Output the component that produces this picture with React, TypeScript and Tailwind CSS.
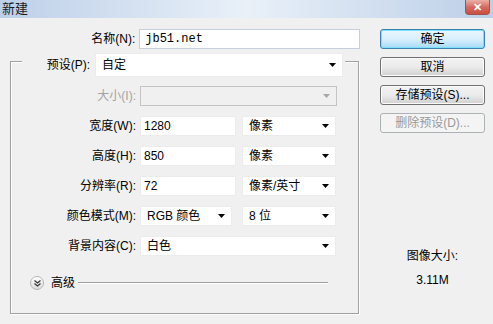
import React from 'react';

const Arrow = ({ disabled = false }: { disabled?: boolean }) => (
    <svg width="7" height="4" viewBox="0 0 7 4" className="shrink-0">
        <path d="M0 0h7L3.5 4z" fill={disabled ? '#a8a8a8' : '#000'} />
    </svg>
);

const Select = ({ value, width, disabled = false }: { value: string; width: string; disabled?: boolean }) => (
    <div
        className={`${width} flex h-[20px] items-center justify-between border pr-[6px] pl-[6px] ${
            disabled ? 'border-[#c4c4c4] bg-[#f0f0f0]' : 'border-[#ececec] bg-white'
        }`}
    >
        <span className="whitespace-nowrap">{value}</span>
        <Arrow disabled={disabled} />
    </div>
);

const Field = ({ value, width }: { value: string; width: string }) => (
    <div className={`${width} flex h-[20px] items-center border border-[#ececec] bg-white pl-[3px]`}>{value}</div>
);

const Row = ({ label, disabled = false, children }: { label: string; disabled?: boolean; children: React.ReactNode }) => (
    <div className="flex h-[20px] items-center">
        <span className={`w-[129px] pr-[4px] text-right whitespace-nowrap ${disabled ? 'text-[#a3a3a3]' : ''}`}>{label}</span>
        <div className="flex gap-[6px]">{children}</div>
    </div>
);

const Btn = ({ label, kind = 'normal' }: { label: string; kind?: 'default' | 'normal' | 'disabled' }) => {
    const styles = {
        default:
            'border-[#3c7fb1] bg-gradient-to-b from-[#eaf6fd] via-[#d9f0fc] to-[#a7d9f5] shadow-[inset_0_0_0_1px_#7ce0f8]',
        normal: 'border-[#707070] bg-gradient-to-b from-[#f2f2f2] via-[#ebebeb] to-[#d0d0d0] shadow-[inset_0_0_0_1px_#fcfcfc]',
        disabled: 'border-[#adb2b5] bg-[#f4f4f4] text-[#9a9a9a]',
    }[kind];
    return (
        <div className={`flex h-[20px] w-[105px] items-center justify-center rounded-[3px] border ${styles}`}>{label}</div>
    );
};

export default function App() {
    return (
        <div className="h-[324px] w-[493px] overflow-hidden bg-[#f0f0f0] font-['Liberation_Sans','Noto_Sans_CJK_SC',sans-serif] text-[12px] leading-[14px] text-black">
            {/* title bar */}
            <div className="flex h-[18px] items-start justify-between bg-gradient-to-r from-[#bdd0e9] via-[#e9f0f8] to-[#bccfe8]">
                <span className="pt-[2px] pl-[2px] text-[13px] leading-[14px] text-[#1a1a1a]">新建</span>
                <div className="mr-[3px] flex h-[15px] w-[25px] items-center justify-center rounded-b-[4px] border border-t-0 border-[#a0544c] bg-gradient-to-b from-[#eab0a6] via-[#d66b5f] to-[#c84e40] text-[11px] leading-[11px] font-bold text-white">
                    ✕
                </div>
            </div>

            <div className="flex">
                {/* left side */}
                <div className="w-[360px] pl-[10px]">
                    <div className="mt-[11px] flex h-[20px] items-center">
                        <span className="w-[130px] pr-[4px] text-right">名称(N):</span>
                        <div className="flex h-[20px] w-[222px] items-center border border-[#c5d0dc] bg-white pl-[5px] font-['Liberation_Mono',monospace] text-[12px]">
                            jb51.net
                        </div>
                    </div>

                    <div className="mt-[12px] h-[253px] w-[349px] border border-[#a0a0a0] shadow-[inset_1px_1px_0_#fff,1px_1px_0_#fff]">
                        <div className="-mt-[9px] mr-[13px] ml-[11px] flex h-[24px] items-center bg-[#f0f0f0]">
                            <span className="w-[73px] pr-[5px] text-right">预设(P):</span>
                            <div className="flex h-[24px] w-[248px] items-center justify-between border border-[#ececec] bg-white pr-[6px] pl-[6px]">
                                <span>自定</span>
                                <Arrow />
                            </div>
                        </div>

                        <div className="mt-[9px] flex flex-col gap-[10px]">
                            <Row label="大小(I):" disabled>
                                <Select value="" width="w-[197px]" disabled />
                            </Row>
                            <Row label="宽度(W):">
                                <Field value="1280" width="w-[96px]" />
                                <Select value="像素" width="w-[94px]" />
                            </Row>
                            <Row label="高度(H):">
                                <Field value="850" width="w-[96px]" />
                                <Select value="像素" width="w-[94px]" />
                            </Row>
                            <Row label="分辨率(R):">
                                <Field value="72" width="w-[96px]" />
                                <Select value="像素/英寸" width="w-[94px]" />
                            </Row>
                            <Row label="颜色模式(M):">
                                <Select value="RGB 颜色" width="w-[92px]" />
                                <div className="ml-[4px]">
                                    <Select value="8 位" width="w-[94px]" />
                                </div>
                            </Row>
                            <Row label="背景内容(C):">
                                <Select value="白色" width="w-[196px]" />
                            </Row>
                        </div>

                        <div className="mt-[20px] ml-[19px] flex items-center">
                            <div className="flex h-[14px] w-[14px] items-center justify-center rounded-full border border-[#b5b5b5] bg-gradient-to-b from-white to-[#dcdcdc]">
                                <svg width="7" height="7" viewBox="0 0 7 7">
                                    <path d="M0.5 0.5L3.5 3L6.5 0.5M0.5 3.5L3.5 6L6.5 3.5" fill="none" stroke="#333" strokeWidth="1.2" />
                                </svg>
                            </div>
                            <span className="ml-[7px]">高级</span>
                            <div className="ml-[3px] h-[2px] w-[250px] border-t border-b border-t-[#a0a0a0] border-b-white" />
                        </div>
                    </div>
                </div>

                {/* right side */}
                <div className="flex w-[133px] flex-col">
                    <div className="mt-[11px] ml-[20px] flex flex-col gap-[8px]">
                        <Btn label="确定" kind="default" />
                        <Btn label="取消" />
                        <Btn label="存储预设(S)..." />
                        <Btn label="删除预设(D)..." kind="disabled" />
                    </div>
                    <div className="mt-[116px] ml-[20px] w-[105px] text-center">图像大小:</div>
                    <div className="mt-[10px] ml-[20px] w-[105px] text-center">3.11M</div>
                </div>
            </div>
        </div>
    );
}
